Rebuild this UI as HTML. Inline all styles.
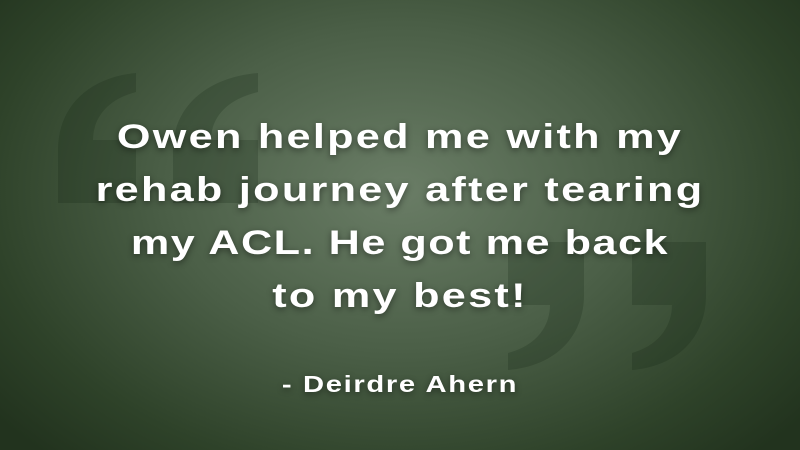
<!DOCTYPE html>
<html><head><style>
html,body{margin:0;padding:0}
body{width:800px;height:450px;overflow:hidden;position:relative;
background:radial-gradient(ellipse 520px 360px at 400px 190px,#6a7d66 0%,#4b5f47 45%,#2e4229 80%,#22331e 100%);
font-family:"Liberation Sans",sans-serif;}
svg{position:absolute;left:0;top:0}
.l{position:absolute;left:0;width:800px;text-align:center;color:#fff;font-weight:bold;font-size:34px;letter-spacing:1.8px;line-height:40px;text-shadow:0 2px 6px rgba(0,0,0,.45);transform:scaleX(1.27);transform-origin:400px 0}
.a{font-size:23px;letter-spacing:1.3px;transform:scaleX(1.27)}
</style></head><body>
<svg width="800" height="450">
<g fill="rgba(20,35,18,0.22)">
<path d="M58,203 L136,203 L136,140 L93,140 C93,120 105,100 136,92 L136,73 C85,78 58,110 58,150 Z"/>
<path d="M173,203 L258,203 L258,140 L211,140 C211,120 224,100 258,92 L258,73 C203,78 173,110 173,150 Z"/>
<path d="M584,242 L508,242 L508,305 L550,305 C550,325 538,345 508,353 L508,370 C557,366 584,335 584,295 Z"/>
<path d="M706,242 L632,242 L632,305 L672,305 C672,325 660,345 632,353 L632,370 C680,366 706,335 706,295 Z"/>
</g></svg>
<div class="l" style="top:117px">Owen helped me with my</div>
<div class="l" style="top:170px">rehab journey after tearing</div>
<div class="l" style="top:223px;letter-spacing:1.2px">my ACL. He got me back</div>
<div class="l" style="top:276px">to my best!</div>
<div class="l a" style="top:364px">- Deirdre Ahern</div>
</body></html>
